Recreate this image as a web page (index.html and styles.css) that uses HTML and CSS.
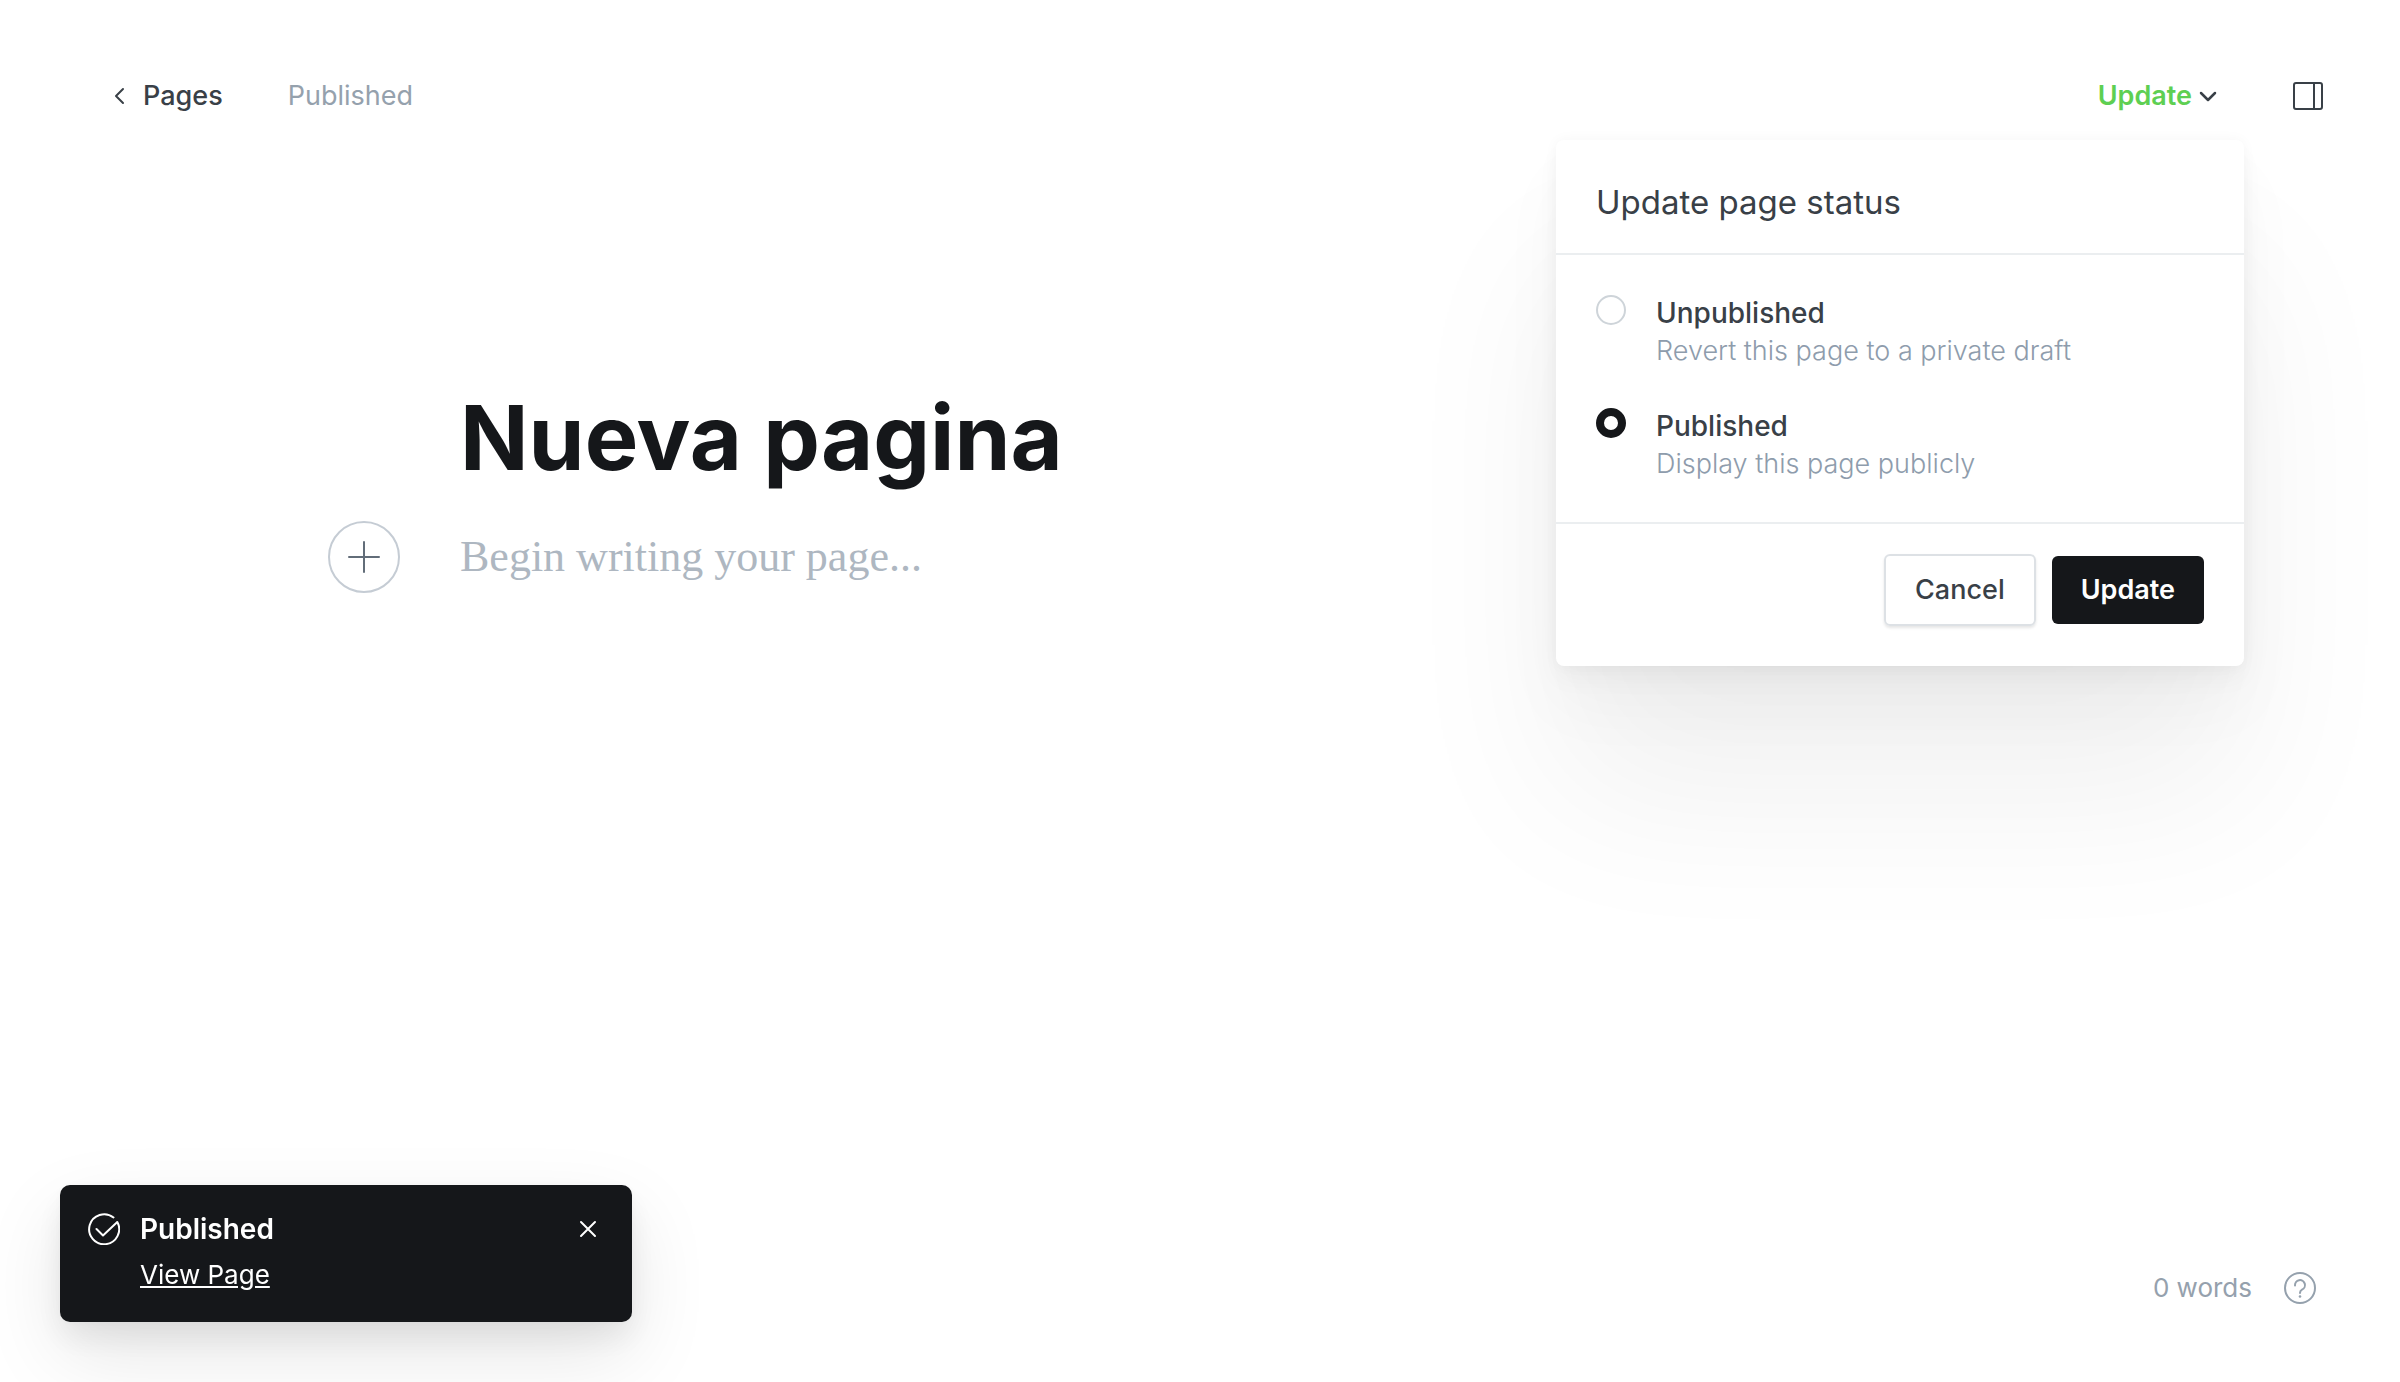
FILE: index.html
```html
<!DOCTYPE html>
<html lang="en">
<head>
<meta charset="utf-8">
<meta name="viewport" content="width=device-width, initial-scale=1">
<title>Nueva pagina</title>
<link rel="stylesheet" href="styles.css">
</head>
<body>
<div class="editor">
  <header class="topbar">
    <nav class="topbar-nav">
      <a class="back-link" href="#pages">
        <svg class="back-icon" width="12" height="18" viewBox="0 0 12 18" aria-hidden="true"><path d="M10 2 3 9l7 7"/></svg>
        Pages
      </a>
      <span class="status">Published</span>
    </nav>
    <div class="topbar-actions">
      <div class="publish-menu">
        <button class="publish-trigger" type="button" aria-expanded="true">
          Update
          <svg class="caret-icon" width="18" height="12" viewBox="0 0 18 12" aria-hidden="true"><path stroke-width="2.500" d="m2 3 7 7 7-7"/></svg>
        </button>
        <form class="dropdown">
          <h2 class="dropdown-title">Update page status</h2>
          <div class="dropdown-options">
            <div class="option">
              <input class="option-radio" type="radio" name="status" id="unpublished">
              <label class="option-label" for="unpublished">Unpublished
                <span class="option-hint">Revert this page to a private draft</span>
              </label>
            </div>
            <div class="option">
              <input class="option-radio" type="radio" name="status" id="published" checked>
              <label class="option-label" for="published">Published
                <span class="option-hint">Display this page publicly</span>
              </label>
            </div>
          </div>
          <div class="dropdown-footer">
            <button class="button button-outline" type="button">Cancel</button>
            <button class="button button-dark" type="button">Update</button>
          </div>
        </form>
      </div>
      <button class="icon-button" type="button" aria-label="Settings">
        <svg class="sidebar-icon" width="32" height="32" viewBox="0 0 32 32" aria-hidden="true"><rect x="2" y="3" width="28" height="26" rx="2"/><path d="M22 3v26"/></svg>
      </button>
    </div>
  </header>

  <main class="canvas">
    <input class="title-input" type="text" value="Nueva pagina" aria-label="Page title">
    <button class="add-card" type="button" aria-label="Add a card">
      <svg width="32" height="32" viewBox="0 0 32 32" aria-hidden="true"><path d="M16 1v30M1 16h30"/></svg>
    </button>
    <textarea class="body-input" rows="1" placeholder="Begin writing your page..." aria-label="Page content"></textarea>
  </main>

  <footer class="bottombar">
    <span class="word-count">0 words</span>
    <a class="help-link" href="#help" aria-label="Help">
      <svg class="help-icon" width="32" height="32" viewBox="0 0 32 32" aria-hidden="true"><circle cx="16" cy="16" r="15"/><path d="M11 13.500a5 5 0 1 1 7 4.200c-1.400.7-2 1.600-2 3.300"/><circle class="help-dot" cx="16" cy="24.500" r="1.300"/></svg>
    </a>
  </footer>
</div>

<aside class="toast" role="status">
  <svg class="toast-icon" width="32" height="32" viewBox="0 0 32 32" aria-hidden="true"><path d="M25.500 4.500A15 15 0 1 0 29.300 9L15 22.500l-6.500-6.500"/></svg>
  <div class="toast-content">
    <strong class="toast-title">Published</strong>
    <a class="toast-link" href="#view">View Page</a>
  </div>
  <button class="toast-close" type="button" aria-label="Close">
    <svg width="18" height="18" viewBox="0 0 18 18" aria-hidden="true"><path d="m2 2 14 14M16 2 2 16"/></svg>
  </button>
</aside>
</body>
</html>
```
FILE: styles.css
```css
*,
*::before,
*::after {
  box-sizing: border-box;
}

body {
  margin: 0;
  background: #fff;
  color: #394047;
  font-family: Inter, "Liberation Sans", sans-serif;
  font-size: 27px;
  line-height: 40px;
}

button,
input,
textarea {
  margin: 0;
  padding: 0;
  border: 0;
  background: none;
  color: inherit;
  font: inherit;
}

button {
  cursor: pointer;
}

svg {
  display: block;
  flex: none;
  fill: none;
  stroke: currentColor;
  stroke-width: 2;
  stroke-linecap: round;
  stroke-linejoin: round;
}

.editor {
  display: flex;
  flex-direction: column;
  min-height: 100vh;
}

/* Top bar */

.topbar {
  display: flex;
  align-items: center;
  justify-content: space-between;
  padding: 76px 76px 0 113px;
}

.topbar-nav,
.topbar-actions {
  display: flex;
  align-items: center;
}

.topbar-nav {
  gap: 65px;
}

.back-link {
  display: flex;
  align-items: center;
  gap: 18px;
  color: #394047;
  font-weight: 500;
  text-decoration: none;
}

.status {
  color: #95a1ad;
}

.topbar-actions {
  gap: 75px;
}

.publish-menu {
  position: relative;
}

.publish-trigger {
  display: flex;
  align-items: center;
  gap: 7px;
  color: #5ecf52;
  font-weight: 600;
}

.caret-icon {
  color: #394047;
}

.icon-button {
  color: #394047;
}

/* Status dropdown */

.dropdown {
  position: absolute;
  z-index: 2;
  top: 64px;
  right: -27px;
  width: 688px;
  border-radius: 8px;
  background: #fff;
  box-shadow:
    0 0 14px rgba(0, 0, 0, 0.04),
    0 14px 24px rgba(0, 0, 0, 0.03),
    0 40px 70px rgba(0, 0, 0, 0.03),
    0 130px 170px rgba(0, 0, 0, 0.06);
}

.dropdown-title {
  margin: 0;
  padding: 42px 40px 31px;
  font-size: 33px;
  font-weight: 400;
}

.dropdown-options {
  display: flex;
  flex-direction: column;
  gap: 37px;
  padding: 38px 40px 40px;
  border: solid #ebeef0;
  border-width: 2px 0;
}

.option {
  display: flex;
  gap: 30px;
}

.option-radio {
  flex: none;
  width: 30px;
  height: 30px;
  margin-top: 2px;
  border: 2px solid #ced4d9;
  border-radius: 50%;
  appearance: none;
}

.option-radio:checked {
  border: 8px solid #15171a;
}

.option-label {
  font-size: 28px;
  font-weight: 500;
}

.option-hint {
  display: block;
  color: #8e9cac;
  font-size: 27px;
  font-weight: 300;
  line-height: 36px;
}

.dropdown-footer {
  display: flex;
  align-items: center;
  justify-content: flex-end;
  gap: 16px;
  padding: 30px 40px 40px;
}

.button {
  height: 68px;
  padding: 0 29px;
  border-radius: 6px;
  font-weight: 500;
}

.button-outline {
  height: 72px;
  border: 2px solid #dde1e5;
  box-shadow: 0 2px 3px rgba(0, 0, 0, 0.1);
}

.button-dark {
  background: #15171a;
  color: #fff;
  font-weight: 600;
}

/* Writing area */

.canvas {
  display: grid;
  flex: 1;
  grid-template-columns: 1fr minmax(0, 1480px) 1fr;
  align-content: start;
  align-items: center;
  row-gap: 24px;
  padding-top: 261px;
}

.title-input {
  grid-column: 2;
  width: 100%;
  height: 120px;
  color: #15171a;
  font-size: 90px;
  font-weight: 700;
}

.add-card {
  display: grid;
  grid-column: 1;
  place-items: center;
  justify-self: end;
  width: 72px;
  height: 72px;
  margin-right: 60px;
  border: 2px solid #c5ccd4;
  border-radius: 50%;
  color: #626d79;
}

.body-input {
  width: 100%;
  height: 64px;
  resize: none;
  font-family: "Liberation Serif", serif;
  font-size: 44px;
  line-height: 64px;
}

.body-input::placeholder {
  color: #aeb7c1;
  opacity: 1;
}

/* Bottom bar */

.bottombar {
  display: flex;
  align-items: center;
  justify-content: flex-end;
  gap: 32px;
  padding: 0 84px 74px;
  color: #95a1ad;
  font-size: 26px;
}

.help-link {
  color: inherit;
}

.help-dot {
  fill: currentColor;
  stroke: none;
}

/* Toast */

.toast {
  position: fixed;
  bottom: 60px;
  left: 60px;
  display: flex;
  align-items: flex-start;
  gap: 20px;
  width: 572px;
  padding: 24px 35px 27px 28px;
  border-radius: 10px;
  background: #15171a;
  box-shadow:
    0 0 12px rgba(0, 0, 0, 0.03),
    0 16px 32px rgba(0, 0, 0, 0.07),
    0 32px 80px rgba(0, 0, 0, 0.1);
  color: #fff;
}

.toast-icon {
  margin-top: 4px;
}

.toast-content {
  display: flex;
  flex: 1;
  flex-direction: column;
  align-items: flex-start;
  gap: 6px;
}

.toast-title {
  font-size: 28px;
  font-weight: 600;
}

.toast-link {
  color: inherit;
  font-size: 26px;
}

.toast-close {
  margin-top: 11px;
}
```
